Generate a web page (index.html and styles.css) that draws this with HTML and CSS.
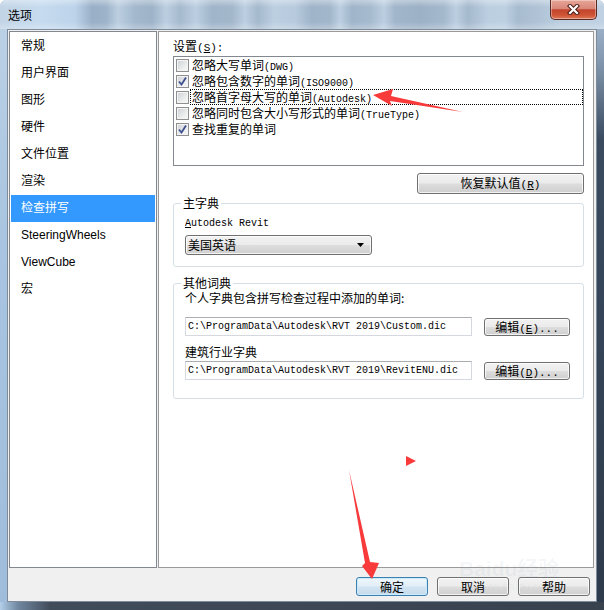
FILE: index.html
```html
<!DOCTYPE html>
<html lang="zh-CN">
<head>
<meta charset="utf-8">
<title>选项</title>
<link rel="stylesheet" href="styles.css">
</head>
<body>
<div class="window">
  <div class="titlebar">
    <span class="title">选项</span>
    <div class="close-btn">
      <svg width="15" height="11" viewBox="0 0 15 11"><path d="M4 2 L11 9 M11 2 L4 9" stroke="#4a1c16" stroke-width="4.2" stroke-linecap="square"/><path d="M4 2 L11 9 M11 2 L4 9" stroke="#ffffff" stroke-width="2.2" stroke-linecap="square"/></svg>
    </div>
  </div>
  <div class="client">
    <div class="main">
      <ul class="nav">
        <li>常规</li>
        <li>用户界面</li>
        <li>图形</li>
        <li>硬件</li>
        <li>文件位置</li>
        <li>渲染</li>
        <li class="active">检查拼写</li>
        <li>SteeringWheels</li>
        <li>ViewCube</li>
        <li>宏</li>
      </ul>
      <div class="panel">
        <div class="label">设置<span class="en mid">(<u>S</u>):</span></div>
        <div class="listbox">
          <div class="row"><span class="cb"></span><span class="lbl">忽略大写单词<span class="en">(DWG)</span></span></div>
          <div class="row"><span class="cb"><svg width="11" height="11" viewBox="0 0 11 11"><path d="M2 5.5 L4.5 8.5 L9 1.5" fill="none" stroke="#3d4f8e" stroke-width="1.8"/></svg></span><span class="lbl">忽略包含数字的单词<span class="en">(ISO9000)</span></span></div>
          <div class="row"><span class="cb"></span><span class="lbl focus">忽略首字母大写的单词<span class="en">(Autodesk)</span></span></div>
          <div class="row"><span class="cb"></span><span class="lbl">忽略同时包含大小写形式的单词<span class="en">(TrueType)</span></span></div>
          <div class="row"><span class="cb"><svg width="11" height="11" viewBox="0 0 11 11"><path d="M2 5.5 L4.5 8.5 L9 1.5" fill="none" stroke="#3d4f8e" stroke-width="1.8"/></svg></span><span class="lbl">查找重复的单词</span></div>
        </div>
        <div class="restore-row"><button class="btn restore">恢复默认值<span class="en mid">(<u>R</u>)</span></button></div>
        <fieldset class="group main-dict">
          <legend>主字典</legend>
          <div class="en-label"><u>A</u>utodesk Revit</div>
          <div class="select"><span>美国英语</span><svg width="7" height="4" viewBox="0 0 7 4"><path d="M0 0 H7 L3.5 4 Z" fill="#000"/></svg></div>
        </fieldset>
        <fieldset class="group other-dict">
          <legend>其他词典</legend>
          <div class="text">个人字典包含拼写检查过程中添加的单词:</div>
          <div class="path-row first"><div class="input">C:\ProgramData\Autodesk\RVT 2019\Custom.dic</div><button class="btn edit">编辑<span class="en mid">(<u>E</u>)...</span></button></div>
          <div class="text second">建筑行业字典</div>
          <div class="path-row"><div class="input">C:\ProgramData\Autodesk\RVT 2019\RevitENU.dic</div><button class="btn edit">编辑<span class="en mid">(<u>D</u>)...</span></button></div>
        </fieldset>
      </div>
    </div>
    <div class="footer">
      <button class="btn foot default">确定</button>
      <button class="btn foot">取消</button>
      <button class="btn foot">帮助</button>
    </div>
  </div>
  <div class="watermark"><span class="wm-big">Baidu经验</span><span class="wm-small">jingyan.baidu.com</span></div>
  <svg class="annot" width="604" height="610" viewBox="0 0 604 610">
    <polygon points="373,95 393,89 391,96 463,112 390,101 392,106" fill="#f83a3a"/>
    <polygon points="349,470 370,562 379,563 372,579 362,566 365,563" fill="#f83a3a"/>
    <polygon points="406,456 416,461 406,466" fill="#f83a3a"/>
  </svg>
</div>
</body>
</html>
```

FILE: styles.css
```css
* { box-sizing: border-box; }
html, body { margin: 0; padding: 0; }
body {
  width: 604px;
  height: 610px;
  overflow: hidden;
  background: #ffffff;
  font-family: "Noto Sans CJK SC", sans-serif;
  font-size: 12px;
  color: #000;
}
.window {
  position: relative;
  width: 604px;
  height: 610px;
  display: flex;
  flex-direction: column;
  padding: 0 7px 8px 7px;
  border-radius: 6px 6px 0 0;
  background:
    linear-gradient(to right, #b3cfea 0, #70879f 18px, #414c5b 50px, #38414e 100%) left bottom / 100% 8px no-repeat,
    linear-gradient(to bottom, #aec3d8 0, #8499b0 60px, #3a4b60 140px, #2d3a4b 100%) right top / 8px 100% no-repeat,
    linear-gradient(to bottom, #bdd2e6 0, #a8c4e0 40%, #9fbddb 100%) left top / 7px 100% no-repeat,
    #a9bfd4;
}
.titlebar {
  height: 29px;
  margin: 0 -7px;
  padding: 0 7px 0 8px;
  display: flex;
  justify-content: space-between;
  border-radius: 6px 6px 0 0;
  background:
    linear-gradient(to bottom, rgba(255,255,255,0.35) 0, rgba(255,255,255,0) 7px, rgba(255,255,255,0) 22px, rgba(255,255,255,0.25) 29px),
    linear-gradient(to right, #c2d4e5 0, #c6dbef 40px, #bcd3ea 75px, #98afc7 92px, #9db3c9 106px, #bccfe1 118px, #a3b8cd 135px, #9eb3c8 152px, #bccfe1 166px, #a6bace 180px, #bccfe1 196px, #a0b5ca 212px, #a3b7cb 232px, #bccfe1 245px, #a5b9cd 258px, #bccfe1 274px, #b8cbde 295px, #9fb4c9 312px, #a3b7cb 330px, #bccfe1 340px, #a0b5ca 352px, #a6bace 370px, #bccfe1 384px, #a2b6cb 395px, #9cb1c6 420px, #a5b9cd 444px, #bccfe1 456px, #a5b9cd 468px, #bccfe1 488px, #bdd0e2 505px, #a8bcd0 518px, #b0c3d6 538px, #bccfe1 560px, #bfd1e2 604px);
}
.title {
  line-height: 29px;
  font-size: 12px;
  color: #000;
}
.close-btn {
  width: 47px;
  height: 20px;
  border: 1px solid #5a2a24;
  border-top: none;
  border-radius: 0 0 5px 5px;
  display: flex;
  align-items: center;
  justify-content: center;
  background: linear-gradient(to bottom, #e7a596 0%, #d9877a 45%, #c2442c 52%, #cf5535 80%, #de7a5c 100%);
  box-shadow: inset 0 0 0 1px rgba(255,255,255,0.35);
}
.client {
  flex: 1;
  display: flex;
  flex-direction: column;
  border: 1px solid #7d8b9a;
  background: #f0f0f0;
  padding: 1px 2px 0 1px;
}
.main {
  display: flex;
  gap: 1px;
  height: 537px;
}
.nav {
  list-style: none;
  margin: 0;
  width: 148px;
  padding: 1px;
  border: 1px solid #828790;
  background: #fff;
  font-family: "Liberation Sans", "Noto Sans CJK SC", sans-serif;
}
.nav li {
  height: 27px;
  line-height: 27px;
  padding-left: 10px;
}
.nav li.active {
  background: #3399ff;
  color: #fff;
}
.panel {
  flex: 1;
  border: 1px solid #9a9a9a;
  background: #fff;
  padding: 7px 9px 0 14px;
}
.en {
  font-family: "Liberation Mono", monospace;
  font-size: 10px;
}
.en.mid { font-size: 11px; }
.label {
  height: 14px;
  line-height: 14px;
}
.listbox {
  width: 411px;
  height: 110px;
  margin-top: 3px;
  border: 1px solid #828790;
  padding: 0 0 0 2px;
}
.row {
  display: flex;
  align-items: center;
  height: 16px;
}
.cb {
  width: 13px;
  height: 13px;
  flex: none;
  border: 1px solid #8e8f8f;
  background: linear-gradient(135deg, #cdd1d6 0%, #eef0f1 70%, #f7f7f7 100%);
  box-shadow: inset 0 0 0 1px #f4f4f4;
  display: flex;
  align-items: center;
  justify-content: center;
}
.lbl {
  flex: 1;
  margin-left: 1px;
  height: 16px;
  line-height: 14px;
  border: 1px dotted transparent;
  padding-left: 1px;
  white-space: nowrap;
}
.lbl.focus { border-color: #000; }
.restore-row {
  width: 411px;
  display: flex;
  justify-content: flex-end;
  margin-top: 7px;
}
.btn {
  font-family: "Noto Sans CJK SC", sans-serif;
  font-size: 12px;
  color: #000;
  padding: 0;
  border: 1px solid #707070;
  border-radius: 3px;
  background: linear-gradient(to bottom, #f2f2f2 0%, #ebebeb 48%, #dddddd 52%, #cfcfcf 100%);
  box-shadow: inset 0 0 0 1px rgba(255,255,255,0.75);
  line-height: 16px;
  white-space: nowrap;
}
.restore {
  width: 167px;
  height: 21px;
}
.group {
  width: 411px;
  margin: 0;
  min-width: 0;
  border: 1px solid #d5dfe5;
  border-radius: 3px;
}
.group legend {
  padding: 0 2px;
  margin-left: -4px;
  line-height: 16px;
  height: 16px;
}
.main-dict {
  margin-top: 1px;
  padding: 6px 10px 11px 11px;
}
.en-label {
  font-family: "Liberation Mono", monospace;
  font-size: 10px;
  height: 14px;
  line-height: 14px;
}
.select {
  width: 187px;
  height: 20px;
  margin-top: 4px;
  border: 1px solid #707070;
  border-radius: 3px;
  background: linear-gradient(to bottom, #f2f2f2 0%, #ebebeb 48%, #dddddd 52%, #cfcfcf 100%);
  box-shadow: inset 0 0 0 1px rgba(255,255,255,0.75);
  display: flex;
  align-items: center;
  justify-content: space-between;
  padding: 0 7px 0 2px;
  line-height: 16px;
}
.other-dict {
  margin-top: 8px;
  padding: 0 10px 18px 11px;
}
.text {
  height: 14px;
  line-height: 14px;
}
.text.second { margin-top: 9px; }
.path-row {
  display: flex;
  align-items: center;
  margin-top: 2px;
}
.path-row.first { margin-top: 12px; }
.input {
  width: 287px;
  height: 19px;
  border: 1px solid #d5d8de;
  border-top-color: #abadb3;
  background: #fff;
  font-family: "Liberation Mono", monospace;
  font-size: 10px;
  line-height: 17px;
  padding-left: 2px;
  white-space: nowrap;
}
.edit {
  width: 86px;
  height: 18px;
  margin-left: 12px;
}
.footer {
  display: flex;
  justify-content: flex-end;
  gap: 9px;
  padding: 9px 4px 0 0;
}
.foot {
  width: 72px;
  height: 19px;
}
.foot.default {
  border-color: #3c7fb1;
  background: linear-gradient(to bottom, #eef6fc 0%, #e1eef8 48%, #d2e4f2 52%, #c6dbec 100%);
  box-shadow: inset 0 0 0 1px #c8ecfb;
}
.watermark {
  position: absolute;
  left: 459px;
  top: 558px;
  display: flex;
  flex-direction: column;
  align-items: center;
  color: rgba(110, 120, 130, 0.07);
  font-family: "Liberation Sans", "Noto Sans CJK SC", sans-serif;
  pointer-events: none;
}
.wm-big {
  font-size: 21px;
  font-weight: bold;
  line-height: 22px;
}
.wm-small {
  font-size: 11px;
  line-height: 12px;
}
.annot {
  position: absolute;
  left: 0;
  top: 0;
  pointer-events: none;
}
```
